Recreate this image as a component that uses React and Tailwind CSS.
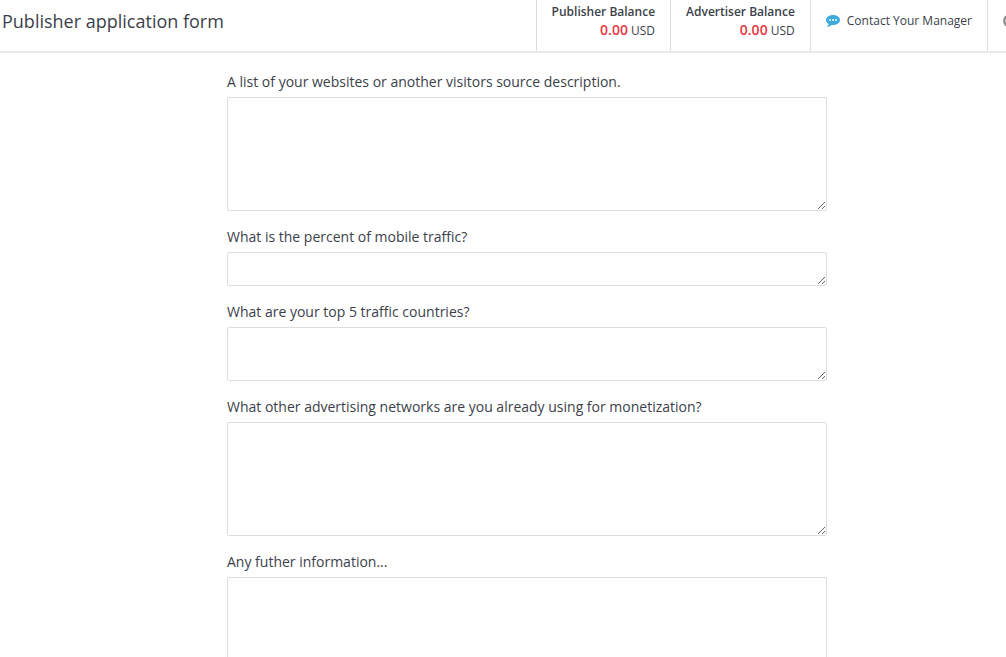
import { FaPowerOff } from "react-icons/fa";

const balances = [
  { label: "Publisher Balance", amount: "0.00", currency: "USD" },
  { label: "Advertiser Balance", amount: "0.00", currency: "USD" },
];

const questions = [
  {
    id: "websites",
    label: "A list of your websites or another visitors source description.",
    height: "h-[114px]",
  },
  {
    id: "mobile",
    label: "What is the percent of mobile traffic?",
    height: "h-[34px]",
  },
  {
    id: "countries",
    label: "What are your top 5 traffic countries?",
    height: "h-[54px]",
  },
  {
    id: "networks",
    label: "What other advertising networks are you already using for monetization?",
    height: "h-[114px]",
  },
  { id: "other", label: "Any futher information...", height: "h-[114px]" },
];

function ChatIcon() {
  return (
    <svg viewBox="0 0 14 12" className="mt-[15px] mr-[7px] h-3 w-3.5" aria-hidden="true">
      <path
        fill="#3fabdc"
        d="M7 0C3.1 0 0 2.2 0 5c0 1.6 1 3 2.6 3.9-.3 1-.8 1.6-1.4 2.2-.2.2-.1.6.3.6 1.600-.2 3-.8 4-1.800.5.1 1 .1 1.500.1 3.900 0 7-2.200 7-5S10.900 0 7 0z"
      />
      <g fill="#ffffff">
        <circle cx="4" cy="5" r="0.9" />
        <circle cx="7" cy="5" r="0.9" />
        <circle cx="10" cy="5" r="0.9" />
      </g>
    </svg>
  );
}

function Header() {
  return (
    <header className="flex h-[53px] shrink-0 items-stretch overflow-hidden border-b-2 border-[#e9e9e9]">
      <h1 className="min-w-0 flex-1 truncate pl-0.5 text-lg leading-[42px]">
        Publisher application form
      </h1>

      {balances.map((balance) => (
        <div
          key={balance.label}
          className="shrink-0 border-l border-[#dddddd] px-[15px] pt-[3px] text-right"
        >
          <div className="text-xs leading-[18px] font-semibold">{balance.label}</div>
          <div className="text-xs leading-[18px]">
            <span className="text-sm leading-[18px] font-semibold text-[#e8383d]">
              {balance.amount}
            </span>{" "}
            {balance.currency}
          </div>
        </div>
      ))}

      <a
        href="#contact"
        className="flex shrink-0 items-start border-l border-[#dddddd] px-[15px] text-xs leading-[41px]"
      >
        <ChatIcon />
        Contact Your Manager
      </a>

      <div className="w-[19px] shrink-0 overflow-hidden border-l border-[#dddddd] pl-[15px]">
        <button type="button" aria-label="Log out" className="mt-3.5 block w-3.5">
          <FaPowerOff size={14} className="text-[#888888]" />
        </button>
      </div>
    </header>
  );
}

export default function App() {
  return (
    <div className="flex h-screen flex-col overflow-hidden bg-white font-['Open_Sans',sans-serif] text-[#3b3f4a]">
      <Header />
      <main className="min-h-0 flex-1 overflow-hidden pt-[19px] pl-12">
        <form className="mx-auto flex max-w-[600px] flex-col gap-4">
          {questions.map((question) => (
            <div key={question.id}>
              <label htmlFor={question.id} className="mb-[5px] block text-sm leading-5">
                {question.label}
              </label>
              <textarea
                id={question.id}
                className={`block w-full resize-y rounded-xs border border-[#dddddd] bg-white px-3 py-1.5 text-sm outline-none ${question.height}`}
              />
            </div>
          ))}
        </form>
      </main>
    </div>
  );
}
